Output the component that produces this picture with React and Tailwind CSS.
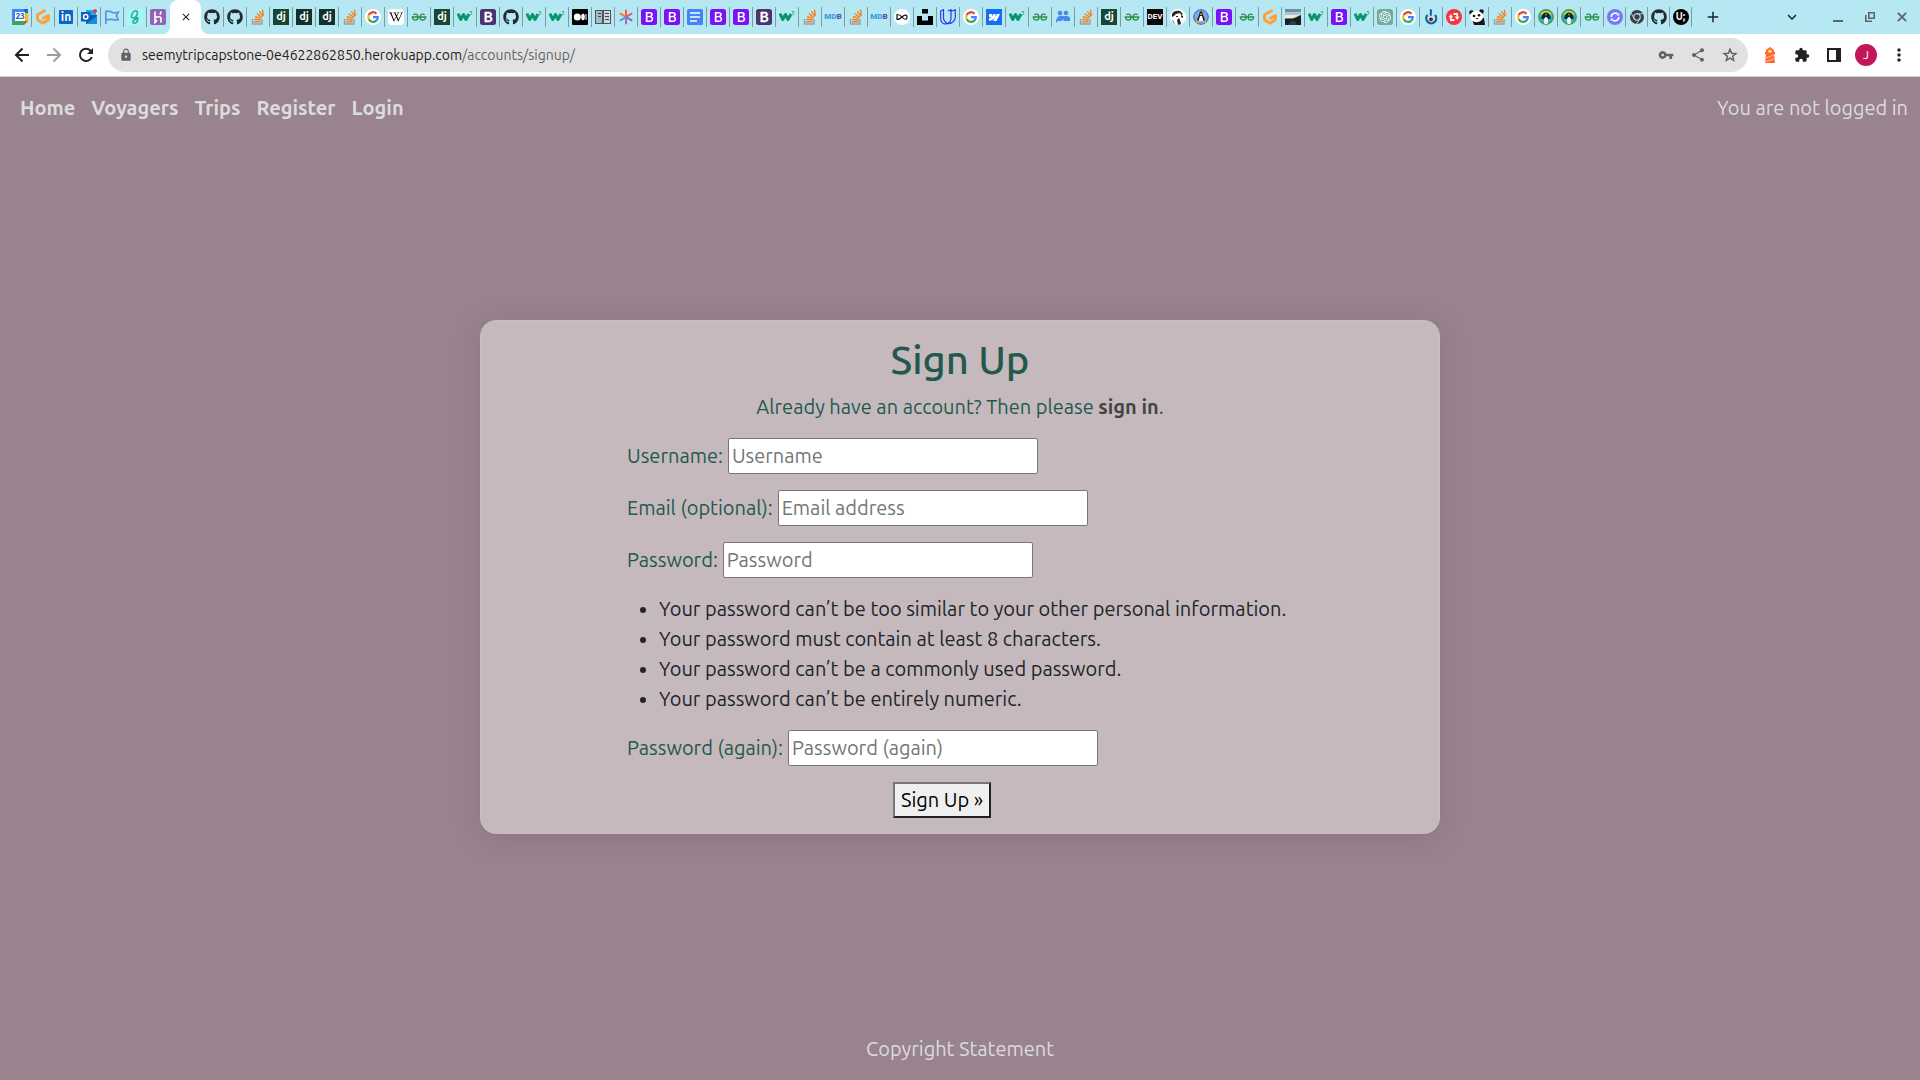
import React from "react";
import { FaGithub, FaWikipediaW } from "react-icons/fa";
import { SiUnsplash, SiWebflow, SiOpenai } from "react-icons/si";
import { MdLock, MdVpnKey, MdShare, MdExtension, MdMoreVert, MdClose, MdAdd, MdKeyboardArrowDown } from "react-icons/md";

const tile = "flex size-4 items-center justify-center overflow-hidden";

function Calendar() {
  return (
    <svg viewBox="0 0 16 16" className="size-4">
      <path fill="#4285f4" d="M0 0h16v12H0z" />
      <path fill="#1967d2" d="M12 0h4v4h-4z" />
      <path fill="#fbbc04" d="M12 4h4v8h-4z" />
      <path fill="#34a853" d="M0 12h12v4H0z" />
      <path fill="#ea4335" d="M12 12h4l-4 4z" />
      <path fill="#4285f4" d="M0 3h3v9H0z" />
      <path fill="#fff" d="M3 3h10v9H3z" />
      <text x="8" y="10.4" fontSize="8" fontWeight="700" textAnchor="middle" fill="#1967d2" fontFamily="Noto Sans">23</text>
    </svg>
  );
}
function Gitpod() {
  return (
    <svg viewBox="0 0 16 16" className="size-4" fill="none" stroke="#ffa03c" strokeWidth="3" strokeLinejoin="round" strokeLinecap="round">
      <path d="M9.500 1.800 3.600 5a2 2 0 0 0-1.100 1.800v3a2 2 0 0 0 1.100 1.800l3.200 2a2 2 0 0 0 2 0l3.700-2.100a2 2 0 0 0 1-1.700V6.600L8.600 9.200" />
    </svg>
  );
}
function LinkedIn() {
  return <span className="flex size-[14px] items-center justify-center overflow-hidden rounded-[1px] bg-[#0a66c2] pb-px text-[12px] leading-none font-bold text-white">in</span>;
}
function Outlook() {
  return (
    <svg viewBox="0 0 16 16" className="size-4">
      <path fill="#28a8ea" d="M5 1h10v8H5z" />
      <path fill="#0f5ea8" d="M5 6h11v9H5z" />
      <path fill="#1490df" d="m5 15 11-8v8z" />
      <path fill="#0a61b5" d="M0 3h9.500v9.500H0z" />
      <circle cx="4.700" cy="7.700" r="2.200" fill="none" stroke="#fff" strokeWidth="1.500" />
      <circle cx="14" cy="2" r="2" fill="#e23b40" />
    </svg>
  );
}
function Flag() {
  return (
    <svg viewBox="0 0 16 16" className="size-4" fill="none" stroke="#5a94e0" strokeWidth="1.700">
      <path d="M1.800 15V2.500c4-1.500 5.500 1.500 8 1.500l4.500-.8-2 3.600 2 4C10 12 7 9 2 11" />
    </svg>
  );
}
function Grammar() {
  return (
    <svg viewBox="0 0 16 16" className="size-4" fill="none" stroke="#3aa69b" strokeWidth="1.600">
      <path stroke="none" fill="#a1fcf3" d="M0 0h16v16H0z" />
      <path d="M10.500 4c0-3-3.500-3-5 0s-1.500 5 .5 5 4-2 4.500-5M5.500 9H11c0 4-2.500 6-4.500 5s0-3.500 5-5" />
    </svg>
  );
}
function Heroku() {
  return (
    <svg viewBox="0 0 16 16" className="size-4">
      <rect width="16" height="16" rx="2" fill="#9163b4" />
      <path d="M5 2.500V9c2-1.300 6-2 6 .5v4M5 10.500v3l1.500-1.500zM11 2.500c0 1.500-.5 2.300-1.200 3" fill="none" stroke="#fff" strokeWidth="1.600" />
    </svg>
  );
}
function Github() {
  return <FaGithub className="size-4 text-[#24292f]" />;
}
function Stack() {
  return (
    <svg viewBox="0 0 16 16" className="size-4" fill="none" strokeWidth="1.400">
      <path stroke="#999da1" d="M2.500 10v5h9.500v-5" />
      <path stroke="#f48024" d="M4 12.800h6.500M4.200 10.300l6.400.7M5 7.500l6 1.900M6.800 4.700l5.100 3.700M9.300 2.300l3.800 5M12.300.7l1.200 6" />
    </svg>
  );
}
function Django() {
  return <span className={`${tile} bg-[#174733] pb-[2px] text-[11px] leading-none font-bold text-white`}>dj</span>;
}
function DjangoDark() {
  return <span className={`${tile} bg-[#11312a] pb-[2px] text-[11px] leading-none font-bold text-white`}>dj</span>;
}
function Google() {
  return (
    <svg viewBox="0 0 16 16" className="size-4" fill="none" strokeWidth="2.200">
      <circle cx="8" cy="8" r="8" fill="#fff" />
      <path stroke="#ea4335" d="M3.600 6.200A4.800 4.800 0 0 1 11.500 4.700" />
      <path stroke="#fbbc05" d="M3.700 10.100a4.800 4.800 0 0 1 0-4.200" />
      <path stroke="#34a853" d="M11.300 11.600a4.800 4.800 0 0 1-7.600-1.500" />
      <path stroke="#4285f4" d="M8 8.200h4.800a4.800 4.800 0 0 1-1.500 3.400" />
    </svg>
  );
}
function Wiki() {
  return <span className={`${tile} rounded-[3px] bg-white`}><FaWikipediaW className="size-[14px] text-black" /></span>;
}
function Geeks() {
  return (
    <svg viewBox="0 0 16 16" className="size-4" fill="none" stroke="#2f8d46" strokeWidth="1.300">
      <path d="M2.300 5.800C4.500 4.200 7 5.400 7 8s-1.100 3.200-2.600 3.200S1.600 10.200 1.300 8h13.400c-.3 2.200-1.600 3.200-3.100 3.200S9 10.600 9 8s2.500-3.800 4.700-2.200" />
    </svg>
  );
}
function W3() {
  return (
    <svg viewBox="0 0 16 16" className="size-4">
      <path d="M1 4.500l2.700 6L6.500 5.500 9 10.500l3-5.500" fill="none" stroke="#059669" strokeWidth="3" strokeLinejoin="round" />
      <path d="M12.800 2.500h2l-1 1.500c1.500 0 1.300 2-.9 1.700" fill="none" stroke="#2fae86" strokeWidth=".9" />
    </svg>
  );
}
function BootPath() {
  return <path fillRule="evenodd" fill="#fff" d="M4.800 3h4c2 0 3 1 3 2.400 0 1.100-.7 1.900-1.700 2.200 1.300.2 2.100 1.100 2.100 2.400 0 1.900-1.400 3-3.500 3H4.800zm1.700 1.400V7h1.800c1.200 0 1.800-.5 1.800-1.400 0-.8-.6-1.200-1.600-1.200zm0 3.900v3.300h2.100c1.300 0 1.900-.6 1.900-1.600 0-1.100-.7-1.700-2-1.700z" />;
}
function Bootstrap() {
  return <svg viewBox="0 0 16 16" className="size-4"><rect width="16" height="16" rx="2.500" fill="#7a12f8" /><BootPath /></svg>;
}
function BootstrapOld() {
  return <svg viewBox="0 0 16 16" className="size-4"><rect width="16" height="16" rx="2.500" fill="#4b3270" /><g stroke="#fff" strokeWidth=".6"><BootPath /></g></svg>;
}
function Medium() {
  return (
    <svg viewBox="0 0 16 16" className="size-4" fill="#fff">
      <rect width="16" height="16" rx="1" fill="#000" />
      <circle cx="5.300" cy="8" r="3.500" /><ellipse cx="11" cy="8" rx="1.800" ry="3.300" /><path d="M13.500 5h1v6h-1z" />
    </svg>
  );
}
function Book() {
  return (
    <svg viewBox="0 0 16 16" className="size-4">
      <path fill="#4a545b" d="M0 1h16v14H0z" />
      <path fill="#a9bac4" d="M1 2h6v12H1z" />
      <path fill="#cfd8dc" d="M9 2h6v12H9z" />
      <path stroke="#3b444a" d="M10 4.500h4M10 7.500h4M10 10.500h4M3 4.500h3M3 7.500h3" />
    </svg>
  );
}
function Asterisk() {
  return (
    <svg viewBox="0 0 16 16" className="size-4" strokeWidth="2" strokeLinecap="round">
      <path stroke="#ee5c43" d="M8 8V1.500" /><path stroke="#d95a76" d="m8 8 5.500-3.300" /><path stroke="#f47b3a" d="M8 8 2.500 4.700" />
      <path stroke="#8a63c8" d="m8 8 5.500 3.300" /><path stroke="#b065a8" d="M8 8v6.500" /><path stroke="#4aa0dd" d="m8 8-5.500 3.300" />
    </svg>
  );
}
function Docs() {
  return (
    <svg viewBox="0 0 16 16" className="size-4">
      <rect width="16" height="16" rx="1.500" fill="#4285f4" />
      <path stroke="#fff" strokeWidth="1.500" d="M3 4h10M3 8h10M3 12h7" />
    </svg>
  );
}
function Mdb() {
  return <span className='font-["Roboto",sans-serif] text-[8px] leading-none font-black text-[#3f9ed4]'>MD<span className="text-[#5d53ae]">B</span></span>;
}
function Infinity() {
  return (
    <svg viewBox="0 0 16 16" className="size-4">
      <circle cx="8" cy="8" r="8" fill="#fff" />
      <path d="M3 5.500v5c2 0 3.500-1 5-2.500s5-3.500 5 0-3 2.500-5 0-3-2.500-5-2.500z" fill="none" stroke="#111" strokeWidth="1.200" />
    </svg>
  );
}
function Unsplash() {
  return <SiUnsplash className="size-4 text-black" />;
}
function Udacity() {
  return (
    <svg viewBox="0 0 16 16" className="size-4" fill="none" stroke="#2a3af0" strokeWidth="1.200">
      <path d="M.7 2 3.500.7V9c0 2 1.500 4 4 5.500C4 16 .7 13.500.7 10zM8 2l3-1.300V9c0 3-1.500 5-3.500 5.500M11 2.500 15.300.7V8c0 4-3.500 7-7.800 6.500" />
    </svg>
  );
}
function Webflow() {
  return <span className={`${tile} bg-[#146ef5]`}><SiWebflow className="size-[11px] text-white" /></span>;
}
function People() {
  return (
    <svg viewBox="0 0 16 16" className="size-4" fill="#4a88ee">
      <circle cx="5" cy="4" r="2.300" /><circle cx="11" cy="4" r="2.300" />
      <path d="M1 14c0-9 6.500-7 6.500-7H12c3 0 3.300 3 3 5H9l-1-2-1 2H3z" />
    </svg>
  );
}
function Dev() {
  return <span className={`${tile} bg-[#0a0a0a] font-["Roboto",sans-serif] text-[8px] leading-none font-bold text-white`}>DEV</span>;
}
function Dog() {
  return (
    <svg viewBox="0 0 16 16" className="size-4">
      <circle cx="8" cy="8" r="8" fill="#fff" />
      <path fill="#2b2523" d="M2 5c1-3 5-4 8-3l3 3-2 1-1-2-4 1-2 2-2 1zM7 11l2-2 1 2 1 4-3 1zM11 6l2 1v2l-2-1zM6 7h2v1H6z" />
      <path fill="#a49a91" d="m2 11 2 1 1 3-2-1z" />
    </svg>
  );
}
function Tux() {
  return (
    <svg viewBox="0 0 16 16" className="size-4">
      <circle cx="8" cy="8" r="7.300" fill="#78a8ea" stroke="#3d62a8" />
      <path fill="#16181c" d="M6.500 4c0-2 3-2 3 0 0 2 2.500 5 2.500 8H4c0-3 2.500-6 2.500-8" />
      <path fill="#fff" d="M7 7h2l1.500 5h-5z" />
      <path fill="#f4b61c" d="m6.500 5 1.500-.8 1.500.8L8 6.300zM3 11l2.500 1 1 2-3.500-.5zM13 11l-2.500 1-1 2 3.500-.5z" />
    </svg>
  );
}
function Photo() {
  return (
    <svg viewBox="0 0 16 16" className="size-4">
      <path fill="#6c8fa8" d="M0 0h16v3H0z" /><path fill="#a9c6cf" d="M0 3h16v3H0z" /><path fill="#f0ead0" d="M0 6h13v3H0z" />
      <path fill="#171f20" d="M0 9.500h8L16 6v10H0z" /><path fill="#2b3f4b" d="M6 12h4l2 4H3z" />
    </svg>
  );
}
function Gpt() {
  return <span className={`${tile} rounded-[3px] bg-[#74aa9c]`}><SiOpenai className="size-3 text-white" /></span>;
}
function Drop() {
  return (
    <svg viewBox="0 0 16 16" className="size-4" fill="none" stroke="#0f639c">
      <path d="M4.500 6a5 5 0 1 0 7.500 0" strokeWidth="2.200" />
      <path d="M7 .5C10 2.500 6 4 8.500 6.500" strokeWidth="2" />
      <circle cx="8" cy="10.300" r="1.900" fill="#970f10" stroke="none" />
    </svg>
  );
}
function RedSwap() {
  return (
    <svg viewBox="0 0 16 16" className="size-4" fill="none">
      <circle cx="8" cy="8" r="8" fill="#f8333b" />
      <path d="M4.800 8.500V11h3.700M11.200 7.500V5H7.500" stroke="#fff" strokeWidth="1.800" />
      <path fill="#fff" d="M2.500 8.500 4.800 5l2.300 3.500zM13.500 7.500 11.200 11 8.900 7.500z" />
    </svg>
  );
}
function Panda() {
  return (
    <svg viewBox="0 0 16 16" className="size-4">
      <path fill="#161616" d="M3 10 15 9l1 7H5z" /><circle cx="2.500" cy="3.500" r="2.300" fill="#161616" /><circle cx="12.500" cy="2.500" r="2.300" fill="#161616" />
      <ellipse cx="7.500" cy="7.500" rx="6.500" ry="5.800" fill="#fff" />
      <circle cx="5" cy="7" r="1.300" fill="#161616" /><circle cx="10" cy="6.200" r="1.300" fill="#161616" /><path fill="#161616" d="M6.500 9h3L8 10.500z" />
    </svg>
  );
}
function Penguin() {
  return (
    <svg viewBox="0 0 16 16" className="size-4">
      <circle cx="8" cy="8" r="7.200" fill="#21b8d8" stroke="#4d9c3a" strokeWidth="1.500" />
      <path fill="#e0d53f" d="M2 6a6.500 6.500 0 0 1 12 0L8 4z" />
      <path fill="#14202b" d="M8 3.500c3 0 4 3 5 6l-2 .5H5l-2-.5c1-3 2-6 5-6" />
      <path fill="#f2f2ee" d="M8 8c2.500 0 2.500 6 1 7H7c-1.500-1-1.500-7 1-7" />
      <path fill="#f0a92d" d="M7 5h2L8 7z" />
    </svg>
  );
}
function Purple() {
  return (
    <svg viewBox="0 0 16 16" className="size-4" fill="none">
      <circle cx="8" cy="8" r="8" fill="#7479f7" />
      <path d="M4.200 8a3.800 3.800 0 0 1 6.500-2.700M11.800 8a3.800 3.800 0 0 1-6.500 2.700" stroke="#fff" strokeWidth="1.600" />
      <path fill="#fff" d="M9.500 6.500h2.800V3.700zM6.500 9.500H3.700v2.800z" />
    </svg>
  );
}
function Chrome() {
  return (
    <svg viewBox="0 0 16 16" className="size-4" fill="none" stroke="#b5e8f2">
      <circle cx="8" cy="8" r="7" fill="#3c4043" stroke="none" />
      <circle cx="8" cy="8" r="3.200" strokeWidth="1.100" />
      <path strokeWidth=".9" d="M8 4.800h6.500M5.200 9.600 2 4M10.800 9.600 7.500 15" />
    </svg>
  );
}
function UBadge() {
  return <span className={`${tile} rounded-full bg-black text-[10px] leading-none font-bold text-white`}>U;</span>;
}

const before = [Calendar, Gitpod, LinkedIn, Outlook, Flag, Grammar, Heroku];
const after = [
  Github, Github, Stack, Django, DjangoDark, DjangoDark, Stack, Google, Wiki, Geeks, Django, W3, BootstrapOld, Github, W3, W3,
  Medium, Book, Asterisk, Bootstrap, Bootstrap, Docs, Bootstrap, Bootstrap, BootstrapOld, W3, Stack, Mdb, Stack, Mdb, Infinity,
  Unsplash, Udacity, Google, Webflow, W3, Geeks, People, Stack, Django, Geeks, Dev, Dog, Tux, Bootstrap, Geeks, Gitpod, Photo,
  W3, Bootstrap, W3, Gpt, Google, Drop, RedSwap, Panda, Stack, Google, Penguin, Penguin, Geeks,
];
const last = [Purple, Chrome, Github, UBadge];

function Tab({ icon: Icon, divider = true, narrow = false }) {
  return (
    <div className={`flex h-5 shrink-0 items-center justify-center border-r ${narrow ? "w-[22px]" : "w-[23px]"} ${divider ? "border-[#7d9ba2]" : "border-transparent"}`}>
      <Icon />
    </div>
  );
}

function TabStrip() {
  return (
    <div className="flex h-[34px] items-center bg-[#b5e8f2] pl-[9px]">
      {before.map((icon, i) => <Tab key={i} icon={icon} divider={i < before.length - 1} />)}
      <div className="relative flex h-full w-[31px] shrink-0 items-center justify-center rounded-t-lg bg-white">
        <span className="absolute bottom-0 -left-2 size-2 bg-[radial-gradient(circle_at_0_0,transparent_8px,white_8px)]" />
        <span className="absolute -right-2 bottom-0 size-2 bg-[radial-gradient(circle_at_100%_0,transparent_8px,white_8px)]" />
        <button aria-label="Close tab"><MdClose className="size-3 text-[#202124]" /></button>
      </div>
      {after.map((icon, i) => <Tab key={i} icon={icon} />)}
      {last.map((icon, i) => <Tab key={i} icon={icon} narrow />)}
      <button aria-label="New tab" className="ml-3"><MdAdd className="size-[18px] text-[#202124]" /></button>
      <div className="ml-auto flex items-center pr-[13px] text-[#5f6368]">
        <button aria-label="Search tabs" className="mr-8"><MdKeyboardArrowDown className="size-[18px] text-[#202124]" /></button>
        <button aria-label="Minimize" className="mr-[22px] flex h-[10px] w-[10px] items-end"><span className="h-[2px] w-full bg-current" /></button>
        <button aria-label="Restore" className="mr-[22px]">
          <svg viewBox="0 0 10 10" className="size-[10px]" fill="none" stroke="currentColor" strokeWidth="1.600"><path d="M3.800.8h5.400v5.400H3.800zM.8 3v6.200H7" /></svg>
        </button>
        <button aria-label="Close window">
          <svg viewBox="0 0 10 10" className="size-[10px]" fill="none" stroke="currentColor" strokeWidth="1.800"><path d="m.8.8 8.400 8.400M9.200.8.8 9.200" /></svg>
        </button>
      </div>
    </div>
  );
}

function Lighthouse() {
  return (
    <svg viewBox="0 0 16 16" className="size-4">
      <path fill="#ff6633" d="M4 3 8 0l4 3v2h1v2h-1l1 9H3l1-9H3V5h1z" /><circle cx="8" cy="4.200" r="1.800" fill="#ffe14d" />
      <path stroke="#ffb199" strokeWidth="1.300" d="m4 11 8-3M3.500 15l9-3.500" />
    </svg>
  );
}

function Toolbar() {
  return (
    <div className="flex h-[43px] items-center border-b border-[#cdd3d4] bg-white pr-[11px] pl-3 text-[#202124]">
      <button aria-label="Back">
        <svg viewBox="0 0 20 20" className="size-5" fill="none" stroke="currentColor" strokeWidth="2"><path d="M17 10H4.500M10.500 3.500 4 10l6.500 6.500" /></svg>
      </button>
      <button aria-label="Forward" className="ml-3 text-[#9b9da0]">
        <svg viewBox="0 0 20 20" className="size-5" fill="none" stroke="currentColor" strokeWidth="2"><path d="M3 10h12.500M9.500 3.500 16 10l-6.500 6.500" /></svg>
      </button>
      <button aria-label="Reload" className="ml-3">
        <svg viewBox="0 0 20 20" className="size-5" fill="none" stroke="currentColor" strokeWidth="2"><path d="M15.800 12a6.100 6.100 0 1 1-1.300-6.300L16 7.500" /><path fill="currentColor" stroke="none" d="M17 3v6h-6z" /></svg>
      </button>
      <div className="ml-3 flex h-[34px] flex-1 items-center rounded-full bg-[#e1e1e1] pr-[10px] pl-[11px] text-[#5f6368]">
        <MdLock className="size-[14px]" />
        <div className="ml-[9px] flex-1 text-[14px]"><span className="text-[#202124]">seemytripcapstone-0e4622862850.herokuapp.com</span>/accounts/signup/</div>
        <div className="flex gap-4">
          <button aria-label="Passwords"><MdVpnKey className="size-4" /></button>
          <button aria-label="Share"><MdShare className="size-4" /></button>
          <button aria-label="Bookmark">
            <svg viewBox="0 0 16 16" className="size-4" fill="none" stroke="currentColor" strokeWidth="1.500"><path d="m8 2.200 1.600 4 4.300.3-3.300 2.700 1.100 4.200L8 11.100l-3.700 2.300 1.100-4.200-3.300-2.700 4.300-.3z" /></svg>
          </button>
        </div>
      </div>
      <div className="ml-[14px] flex items-center">
        <button aria-label="Lighthouse"><Lighthouse /></button>
        <button aria-label="Extensions" className="ml-4"><MdExtension className="size-4" /></button>
        <button aria-label="Side panel" className="ml-4">
          <svg viewBox="0 0 16 16" className="size-4"><path fillRule="evenodd" fill="#202124" d="M1 1h14v14H1zM3 3v10h7V3z" /></svg>
        </button>
        <button className="ml-[13px] flex size-[22px] items-center justify-center rounded-full bg-[#c2185b] text-[12px] leading-none text-white">J</button>
        <button aria-label="Menu" className="ml-3"><MdMoreVert className="size-5" /></button>
      </div>
    </div>
  );
}

function Field({ id, label, type, placeholder }) {
  return (
    <div className="mb-4 flex items-center gap-[5px]">
      <label htmlFor={id} className="text-[#22594d]">{label}</label>
      <input id={id} type={type} placeholder={placeholder} className="h-9 w-[310px] rounded-[2px] border border-[#767676] bg-white px-[3px] placeholder:text-[#757575]" />
    </div>
  );
}

const rules = [
  "Your password can’t be too similar to your other personal information.",
  "Your password must contain at least 8 characters.",
  "Your password can’t be a commonly used password.",
  "Your password can’t be entirely numeric.",
];

export default function App() {
  return (
    <div className='flex min-h-screen flex-col bg-[#99838e] font-["Ubuntu","Noto_Sans",sans-serif]'>
      <TabStrip />
      <Toolbar />
      <div className="flex flex-1 flex-col text-[20px] leading-[30px] text-[#212529]">
        <nav className="flex items-center justify-between pt-4 pr-3 pl-5 text-[#dcdcdc]">
          <div className="flex gap-4 font-bold">
            {["Home", "Voyagers", "Trips", "Register", "Login"].map((t) => <a key={t} href="#">{t}</a>)}
          </div>
          <span>You are not logged in</span>
        </nav>
        <main className="flex flex-1 items-center justify-center pb-1">
          <section className="w-1/2 rounded-2xl border border-[#cbbdc3] bg-[#c5b9bd] px-[146px] pt-[15px] pb-[15px] shadow-[0_4px_30px_rgba(0,0,0,0.1)]">
            <h1 className="mb-2 text-center text-[40px] leading-[48px] font-medium text-[#22594d]">Sign Up</h1>
            <p className="mb-4 text-center text-[#22594d]">Already have an account? Then please <a href="#" className="font-bold text-[#444444]">sign in</a>.</p>
            <form onSubmit={(e) => e.preventDefault()}>
              <Field id="username" label="Username:" type="text" placeholder="Username" />
              <Field id="email" label="Email (optional):" type="email" placeholder="Email address" />
              <Field id="password1" label="Password:" type="password" placeholder="Password" />
              <ul className="mb-4 list-disc pl-8">
                {rules.map((r) => <li key={r}>{r}</li>)}
              </ul>
              <Field id="password2" label="Password (again):" type="password" placeholder="Password (again)" />
              <button type="submit" className="ml-[266px] block h-9 border-2 border-t-[#767676] border-r-[#212121] border-b-[#212121] border-l-[#767676] bg-[#efefef] px-[6px] leading-8 text-black">Sign Up »</button>
            </form>
          </section>
        </main>
        <footer className="pb-4 text-center text-[#dcdcdc]">Copyright Statement</footer>
      </div>
    </div>
  );
}
